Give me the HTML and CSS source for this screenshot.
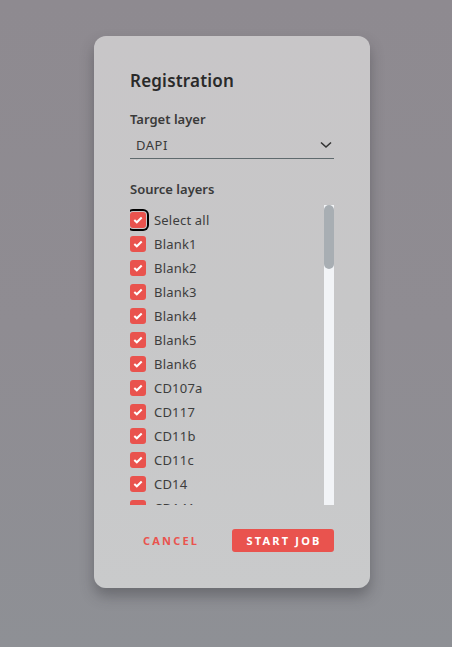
FILE: index.html
```html
<!DOCTYPE html>
<html>
<head>
<meta charset="utf-8">
<link rel="stylesheet" href="styles.css">
</head>
<body>
<div class="backdrop">
  <div class="dialog">
    <h1 class="title">Registration</h1>
    <div class="field">
      <div class="label">Target layer</div>
      <div class="select">
        <span>DAPI</span>
        <svg class="chev" width="12" height="8" viewBox="0 0 12 8"><path d="M1 1.5 L6 6 L11 1.5" fill="none" stroke="#333" stroke-width="1.6"/></svg>
      </div>
    </div>
    <div class="field source">
      <div class="label">Source layers</div>
      <div class="listwrap">
        <ul class="list">
          <li class="row focus"><span class="cb"><svg width="10" height="8" viewBox="0 0 10 8"><path d="M1.3 4 L3.8 6.3 L8.7 1.5" fill="none" stroke="#fff" stroke-width="2"/></svg></span>Select all</li>
          <li class="row"><span class="cb"><svg width="10" height="8" viewBox="0 0 10 8"><path d="M1.3 4 L3.8 6.3 L8.7 1.5" fill="none" stroke="#fff" stroke-width="2"/></svg></span>Blank1</li>
          <li class="row"><span class="cb"><svg width="10" height="8" viewBox="0 0 10 8"><path d="M1.3 4 L3.8 6.3 L8.7 1.5" fill="none" stroke="#fff" stroke-width="2"/></svg></span>Blank2</li>
          <li class="row"><span class="cb"><svg width="10" height="8" viewBox="0 0 10 8"><path d="M1.3 4 L3.8 6.3 L8.7 1.5" fill="none" stroke="#fff" stroke-width="2"/></svg></span>Blank3</li>
          <li class="row"><span class="cb"><svg width="10" height="8" viewBox="0 0 10 8"><path d="M1.3 4 L3.8 6.3 L8.7 1.5" fill="none" stroke="#fff" stroke-width="2"/></svg></span>Blank4</li>
          <li class="row"><span class="cb"><svg width="10" height="8" viewBox="0 0 10 8"><path d="M1.3 4 L3.8 6.3 L8.7 1.5" fill="none" stroke="#fff" stroke-width="2"/></svg></span>Blank5</li>
          <li class="row"><span class="cb"><svg width="10" height="8" viewBox="0 0 10 8"><path d="M1.3 4 L3.8 6.3 L8.7 1.5" fill="none" stroke="#fff" stroke-width="2"/></svg></span>Blank6</li>
          <li class="row"><span class="cb"><svg width="10" height="8" viewBox="0 0 10 8"><path d="M1.3 4 L3.8 6.3 L8.7 1.5" fill="none" stroke="#fff" stroke-width="2"/></svg></span>CD107a</li>
          <li class="row"><span class="cb"><svg width="10" height="8" viewBox="0 0 10 8"><path d="M1.3 4 L3.8 6.3 L8.7 1.5" fill="none" stroke="#fff" stroke-width="2"/></svg></span>CD117</li>
          <li class="row"><span class="cb"><svg width="10" height="8" viewBox="0 0 10 8"><path d="M1.3 4 L3.8 6.3 L8.7 1.5" fill="none" stroke="#fff" stroke-width="2"/></svg></span>CD11b</li>
          <li class="row"><span class="cb"><svg width="10" height="8" viewBox="0 0 10 8"><path d="M1.3 4 L3.8 6.3 L8.7 1.5" fill="none" stroke="#fff" stroke-width="2"/></svg></span>CD11c</li>
          <li class="row"><span class="cb"><svg width="10" height="8" viewBox="0 0 10 8"><path d="M1.3 4 L3.8 6.3 L8.7 1.5" fill="none" stroke="#fff" stroke-width="2"/></svg></span>CD14</li>
          <li class="row"><span class="cb"><svg width="10" height="8" viewBox="0 0 10 8"><path d="M1.3 4 L3.8 6.3 L8.7 1.5" fill="none" stroke="#fff" stroke-width="2"/></svg></span>CD141</li>
        </ul>
        <div class="scrollbar"><div class="thumb"></div></div>
      </div>
    </div>
    <div class="actions">
      <button class="btn cancel">CANCEL</button>
      <button class="btn start">START JOB</button>
    </div>
  </div>
</div>
</body>
</html>
```
FILE: styles.css
```css
* { box-sizing: border-box; }
html, body { margin: 0; padding: 0; }
body {
  width: 452px;
  height: 647px;
  overflow: hidden;
  font-family: "Noto Sans", "Liberation Sans", sans-serif;
  color: #333;
}
.backdrop {
  width: 452px;
  height: 647px;
  background: linear-gradient(180deg, #8e8a90 0%, #8f8c92 50%, #8e9095 100%);
  padding-top: 36px;
  display: flex;
  justify-content: center;
  align-items: flex-start;
}
.dialog {
  width: 276px;
  height: 552px;
  margin-left: 12px;
  background: linear-gradient(180deg, #c8c6c8 0%, #c7c7c8 50%, #c9cacb 100%);
  border-radius: 12px;
  box-shadow: 0 8px 14px rgba(40, 40, 45, 0.35);
  padding: 33px 36px 0 36px;
  display: flex;
  flex-direction: column;
}
.title {
  margin: 0;
  font-size: 17px;
  font-weight: 600;
  line-height: 24px;
  color: #2a2a2a;
  letter-spacing: 0.2px;
}
.field { margin-top: 17px; }
.label {
  font-size: 13px;
  font-weight: 600;
  line-height: 18px;
  color: #3a3a3a;
}
.select {
  margin-top: 6px;
  height: 25px;
  border-bottom: 1px solid #5f6a6e;
  display: flex;
  align-items: center;
  justify-content: space-between;
  padding: 0 2px 2px 6px;
  font-size: 13px;
  color: #3a3a3a;
  letter-spacing: 0.5px;
}
.source { margin-top: 21px; }
.listwrap {
  margin-top: 7px;
  height: 300px;
  display: flex;
  overflow: hidden;
}
.list {
  list-style: none;
  margin: 0;
  padding: 3px 0 0 0;
  flex: 1;
}
.row {
  height: 24px;
  display: flex;
  align-items: center;
  font-size: 13px;
  color: #3d3d3d;
  letter-spacing: 0.2px;
}
.cb {
  width: 16px;
  height: 16px;
  border-radius: 3px;
  background: #e9534e;
  display: flex;
  align-items: center;
  justify-content: center;
  margin-right: 8px;
  flex: none;
}
.focus .cb { box-shadow: 0 0 0 1px #c8c6c8, 0 0 0 3px #000; }
.scrollbar {
  width: 10px;
  height: 300px;
  background: #f2f4f7;
  flex: none;
}
.thumb {
  width: 10px;
  height: 64px;
  background: #a8aeb3;
  border-radius: 5px;
}
.actions {
  margin-top: 24px;
  display: flex;
  justify-content: space-between;
  align-items: center;
}
.btn {
  border: none;
  font-family: inherit;
  font-size: 11px;
  font-weight: 700;
  letter-spacing: 2.2px;
  height: 23px;
  border-radius: 3px;
  cursor: pointer;
}
.cancel {
  background: transparent;
  color: #e9534e;
  padding: 0 13px;
}
.start {
  background: #e9534e;
  color: #fff;
  width: 102px;
  padding: 0 0 0 2px;
}
```
